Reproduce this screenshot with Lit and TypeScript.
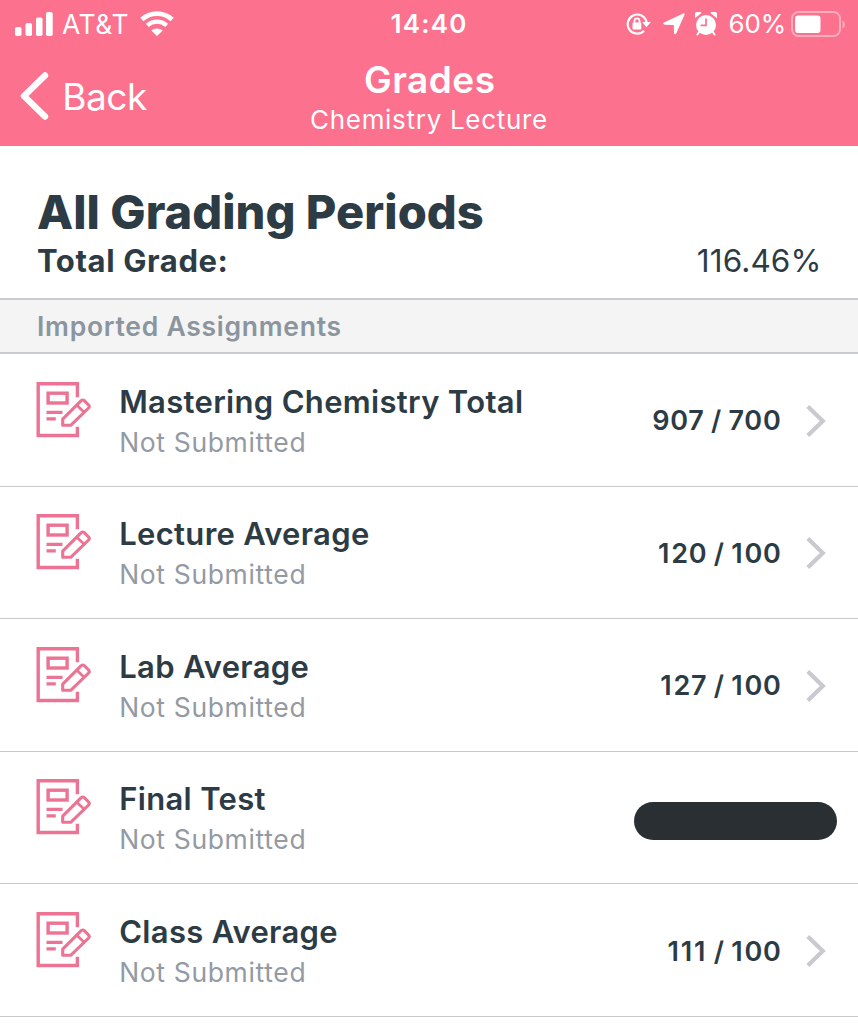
import { LitElement, html, css } from "lit";
import { customElement, property } from "lit/decorators.js";

interface Assignment {
  title: string;
  status: string;
  score?: string;
}

const assignments: Assignment[] = [
  { title: "Mastering Chemistry Total", status: "Not Submitted", score: "907 / 700" },
  { title: "Lecture Average", status: "Not Submitted", score: "120 / 100" },
  { title: "Lab Average", status: "Not Submitted", score: "127 / 100" },
  { title: "Final Test", status: "Not Submitted" },
  { title: "Class Average", status: "Not Submitted", score: "111 / 100" },
];

@customElement("status-bar")
class StatusBar extends LitElement {
  static styles = css`
    :host {
      display: grid;
      grid-template-columns: 1fr auto 1fr;
      align-items: center;
      height: 47px;
      color: #fff;
      font-size: 26px;
    }
    svg { display: block; }
    .side { display: flex; align-items: center; }
    .left { padding-left: 15px; }
    .right { justify-content: flex-end; padding-right: 13px; }
    .carrier { margin: 0 10.5px 0 9px; font-size: 26.5px; letter-spacing: 0.55px; }
    .clock { font-weight: 600; letter-spacing: 1.2px; }
    .percent { margin: 0 5px 0 12px; letter-spacing: -0.2px; }
    .location { margin: 0 10px 0 12px; }
  `;

  render() {
    return html`
      <div class="side left">
        <svg width="38" height="24" viewBox="0 0 38 24" fill="#fff">
          <rect x="0" y="15" width="6.5" height="9" rx="1.8" />
          <rect x="10.5" y="11" width="6.5" height="13" rx="1.8" />
          <rect x="21" y="5.5" width="6.5" height="18.5" rx="1.8" />
          <rect x="31" y="0" width="6.7" height="24" rx="1.8" />
        </svg>
        <span class="carrier">AT&amp;T</span>
        <svg width="34" height="25" viewBox="0 0 34 25" fill="none" stroke="#fff">
          <path d="M1.8 8.6C10.5.6 23.5.6 32.2 8.6" stroke-width="4.8" />
          <path d="M7.3 14.4C13 9.3 21 9.3 26.7 14.4" stroke-width="4.4" />
          <path d="M17 25L11.3 19.5C14.5 16.8 19.5 16.8 22.7 19.5Z" fill="#fff" stroke="none" />
        </svg>
      </div>
      <div class="clock">14:40</div>
      <div class="side right">
        <svg width="25" height="22" viewBox="0 0 25 22" fill="none" stroke="#fff">
          <path d="M18 17.7A9.5 9.5 0 1 1 20.6 9.5" stroke-width="2.2" />
          <path d="M16.2 9H24.8L20.5 14.2Z" fill="#fff" stroke="none" />
          <rect x="6.5" y="9.5" width="8.8" height="7" rx="1" fill="#fff" stroke="none" />
          <path d="M8.5 10V7.8A2.5 2.5 0 0 1 13.5 7.8V10" stroke-width="1.7" />
        </svg>
        <svg class="location" width="22" height="22" viewBox="0 0 22 22" fill="#fff">
          <path d="M20.2.4Q21.9.1 21.5 1.8L13.3 20.3Q11.8 22.3 11 20L10.8 12L1.8 11.7Q-.7 11 1 9.4Z" />
        </svg>
        <svg width="22" height="24" viewBox="0 0 22 24" fill="#fff">
          <circle cx="11" cy="13" r="10" />
          <path d="M.3 6A4 4 0 0 1 6.6 1ZM21.7 6A4 4 0 0 0 15.4 1Z" />
          <path d="M4.2 20L2.4 22.5M17.8 20L19.6 22.5" stroke="#fff" stroke-width="2" stroke-linecap="round" />
          <path d="M11 6.5V13.4H5.6" fill="none" stroke="#fb718e" stroke-width="1.7" />
        </svg>
        <span class="percent">60%</span>
        <svg width="54" height="26" viewBox="0 0 54 26">
          <rect x="1" y="1" width="48" height="24" rx="6.5" fill="none" stroke="#fff" stroke-opacity=".42" stroke-width="2" />
          <rect x="4" y="4.5" width="25.5" height="17.5" rx="3" fill="#fff" />
          <path d="M51.5 9.5Q54 11 54 13.5T51.5 17.5Z" fill="#fff" fill-opacity=".42" />
        </svg>
      </div>
    `;
  }
}

@customElement("assignment-row")
class AssignmentRow extends LitElement {
  @property({ attribute: false }) item!: Assignment;

  static styles = css`
    :host {
      display: flex;
      box-sizing: border-box;
      height: 132.6px;
      padding-left: 36px;
      border-bottom: 1px solid #c7cacd;
    }
    svg { display: block; flex: none; }
    .icon { margin-top: 27.5px; }
    .body { flex: 1; padding: 27.5px 0 0 27.2px; white-space: nowrap; }
    .title { font-size: 31px; line-height: 40px; font-weight: 600; letter-spacing: 0.32px; color: #2d3b45; }
    .status { font-size: 26.5px; line-height: 40px; letter-spacing: 0.65px; color: #939aa3; }
    .trail { display: flex; align-items: center; padding: 2px 32px 0 0; }
    .score { font-size: 27px; font-weight: 600; letter-spacing: 0.75px; word-spacing: -1.1px; color: #2d3b45; margin-right: 24.5px; white-space: pre; }
    .one { letter-spacing: 1.8px; }
    .redacted { width: 203px; height: 38px; border-radius: 19px; background: #2a2f33; margin: 4px -11px 0 0; }
  `;

  // The digit one is narrow in this face, so it gets a little more tracking.
  private score(text: string) {
    return text.split(/(1)/).filter(Boolean).map((part) =>
      part === "1" ? html`<span class="one">1</span>` : part
    );
  }

  render() {
    const { title, status, score } = this.item;
    return html`
      <svg class="icon" width="56" height="56" viewBox="0 0 56 56" fill="none" stroke="#ec7393" stroke-width="3.4">
        <path d="M41.4 15.3V1.7H2.2V53.5H41.4V44.8" />
        <rect x="12.1" y="11.2" width="19" height="9.8" />
        <path d="M10.5 30.4H26.5M10.5 36.8H19.8" stroke-width="3.2" />
        <path d="M26.7 43.3V37.2L45.2 18.7Q46.8 17.3 48.3 18.7L52.6 23Q53.9 24.5 52.6 26L34.7 43.3Z" stroke-width="3.1" stroke-linejoin="round" />
        <path d="M40.8 23.3L48.2 30.3" stroke-width="2.8" />
      </svg>
      <div class="body">
        <div class="title">${title}</div>
        <div class="status">${status}</div>
      </div>
      <div class="trail">
        ${score
          ? html`<span class="score">${this.score(score)}</span>
              <svg width="20" height="32" viewBox="0 0 20 32" fill="none" stroke="#c9cad0" stroke-width="4.2">
                <path d="M1.8 1.5L16.8 16L1.8 30.5" />
              </svg>`
          : html`<div class="redacted"></div>`}
      </div>
    `;
  }
}

@customElement("app-root")
class AppRoot extends LitElement {
  static styles = css`
    :host {
      display: block;
      height: 1023px;
      overflow: hidden;
      background: #fff;
      font-family: Inter, "Liberation Sans", sans-serif;
    }
    .header { height: 146px; background: #fb718e; color: #fff; }
    .nav { display: grid; grid-template-columns: 1fr auto 1fr; height: 99px; }
    .back { display: flex; align-items: center; padding-left: 20px; font-size: 37px; gap: 13.2px; letter-spacing: -0.4px; }
    .back svg { display: block; margin-top: -1px; }
    .heading { text-align: center; }
    .name { font-size: 37px; line-height: 44px; padding: 10.5px 0 0 1.5px; font-weight: 600; letter-spacing: 0.5px; }
    .course { font-size: 26px; line-height: 36px; letter-spacing: 0.7px; padding-top: 0.5px; }
    .summary { box-sizing: border-box; height: 152px; padding: 38px 36.5px 0 37px; color: #2d3b45; }
    .period { font-size: 47px; line-height: 56px; font-weight: 800; letter-spacing: 0.04px; }
    .total { display: flex; justify-content: space-between; font-size: 31px; line-height: 42px; }
    .label { font-weight: 700; letter-spacing: 0.6px; }
    .value { font-size: 31.5px; letter-spacing: 0.1px; }
    .section {
      box-sizing: border-box;
      height: 56px;
      border-top: 2px solid #c7cacf;
      border-bottom: 2px solid #c7cacf;
      background: #f4f4f5;
      padding-left: 37px;
      font-size: 26.5px;
      line-height: 52px;
      font-weight: 600;
      letter-spacing: 0.73px;
      color: #8b959e;
    }
  `;

  render() {
    return html`
      <div class="header">
        <status-bar></status-bar>
        <div class="nav">
          <div class="back">
            <svg width="29" height="50" viewBox="0 0 29 50" fill="none" stroke="#fff" stroke-width="6.4" stroke-linecap="round" stroke-linejoin="round">
              <path d="M25 4.5L4 25L25 45.5" />
            </svg>
            <span>Back</span>
          </div>
          <div class="heading">
            <div class="name">Grades</div>
            <div class="course">Chemistry Lecture</div>
          </div>
        </div>
      </div>
      <div class="summary">
        <div class="period">All Grading Periods</div>
        <div class="total"><span class="label">Total Grade:</span><span class="value">116.46%</span></div>
      </div>
      <div class="section">Imported Assignments</div>
      ${assignments.map((a) => html`<assignment-row .item=${a}></assignment-row>`)}
    `;
  }
}
